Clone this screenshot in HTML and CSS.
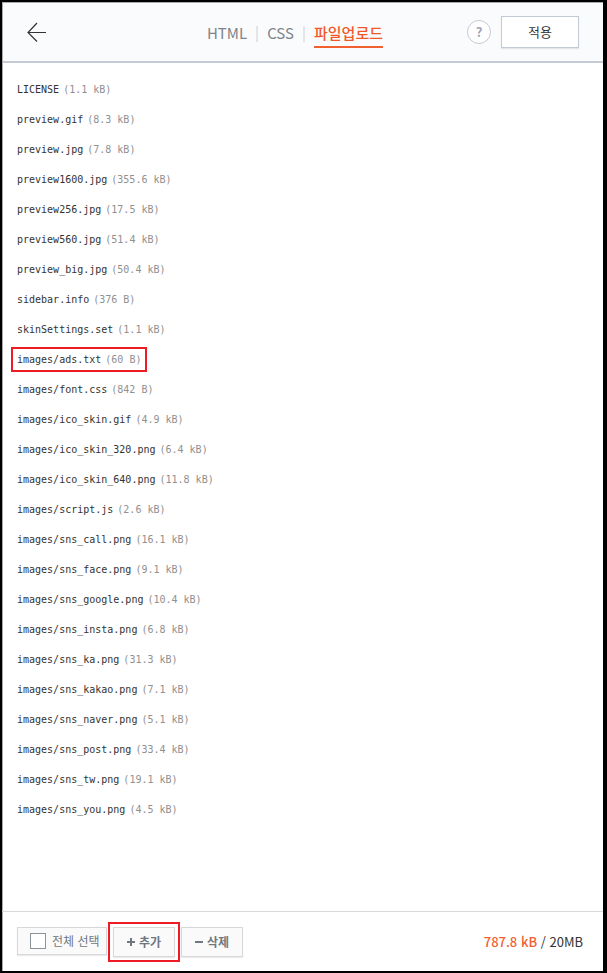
FILE: index.html
```html
<!DOCTYPE html>
<html lang="ko">
<head>
    <meta charset="UTF-8">
    <meta name="viewport" content="width=device-width, initial-scale=1.0">
    <title>파일업로드</title>
    <link rel="stylesheet" href="styles.css">
</head>
<body>
    <div class="editor">
        <header class="header">
            <button type="button" class="btn-back" aria-label="뒤로">
                <svg width="20" height="20" viewBox="0 0 20 20" fill="none" stroke="#333" stroke-width="1.2"><path d="M19 10.5H1M10 1L1 10.5L10 19.5"/></svg>
            </button>
            <nav class="tabs">
                <a href="#" class="tab">HTML</a>
                <a href="#" class="tab">CSS</a>
                <a href="#" class="tab on">파일업로드</a>
            </nav>
            <div class="header-right">
                <button type="button" class="btn-help">?</button>
                <button type="button" class="btn-apply">적용</button>
            </div>
        </header>

        <main class="content">
            <ul class="file-list">
                <li><span class="file">LICENSE<span class="size">(1.1 kB)</span></span></li>
                <li><span class="file">preview.gif<span class="size">(8.3 kB)</span></span></li>
                <li><span class="file">preview.jpg<span class="size">(7.8 kB)</span></span></li>
                <li><span class="file">preview1600.jpg<span class="size">(355.6 kB)</span></span></li>
                <li><span class="file">preview256.jpg<span class="size">(17.5 kB)</span></span></li>
                <li><span class="file">preview560.jpg<span class="size">(51.4 kB)</span></span></li>
                <li><span class="file">preview_big.jpg<span class="size">(50.4 kB)</span></span></li>
                <li><span class="file">sidebar.info<span class="size">(376 B)</span></span></li>
                <li><span class="file">skinSettings.set<span class="size">(1.1 kB)</span></span></li>
                <li><span class="file marked">images/ads.txt<span class="size">(60 B)</span></span></li>
                <li><span class="file">images/font.css<span class="size">(842 B)</span></span></li>
                <li><span class="file">images/ico_skin.gif<span class="size">(4.9 kB)</span></span></li>
                <li><span class="file">images/ico_skin_320.png<span class="size">(6.4 kB)</span></span></li>
                <li><span class="file">images/ico_skin_640.png<span class="size">(11.8 kB)</span></span></li>
                <li><span class="file">images/script.js<span class="size">(2.6 kB)</span></span></li>
                <li><span class="file">images/sns_call.png<span class="size">(16.1 kB)</span></span></li>
                <li><span class="file">images/sns_face.png<span class="size">(9.1 kB)</span></span></li>
                <li><span class="file">images/sns_google.png<span class="size">(10.4 kB)</span></span></li>
                <li><span class="file">images/sns_insta.png<span class="size">(6.8 kB)</span></span></li>
                <li><span class="file">images/sns_ka.png<span class="size">(31.3 kB)</span></span></li>
                <li><span class="file">images/sns_kakao.png<span class="size">(7.1 kB)</span></span></li>
                <li><span class="file">images/sns_naver.png<span class="size">(5.1 kB)</span></span></li>
                <li><span class="file">images/sns_post.png<span class="size">(33.4 kB)</span></span></li>
                <li><span class="file">images/sns_tw.png<span class="size">(19.1 kB)</span></span></li>
                <li><span class="file">images/sns_you.png<span class="size">(4.5 kB)</span></span></li>
            </ul>
        </main>

        <footer class="footer">
            <div class="actions">
                <label class="check-all" for="checkAll"><input type="checkbox" id="checkAll">전체 선택</label>
                <button type="button" class="btn-file marked">
                    <svg width="8" height="8" viewBox="0 0 8 8" fill="#6f7780"><path d="M3 0h2v3h3v2H5v3H3V5H0V3h3z"/></svg>추가
                </button>
                <button type="button" class="btn-file">
                    <svg width="8" height="8" viewBox="0 0 8 8" fill="#6f7780"><path d="M0 3h8v2H0z"/></svg>삭제
                </button>
            </div>
            <p class="usage"><strong>787.8 kB</strong> / 20MB</p>
        </footer>
    </div>
</body>
</html>
```

FILE: styles.css
```css
* {
    box-sizing: border-box;
}
body {
    margin: 0;
    font-family: "Noto Sans CJK KR", sans-serif;
    color: #333;
}
button {
    margin: 0;
    padding: 0;
    font-family: inherit;
    cursor: pointer;
}
.editor {
    display: flex;
    flex-direction: column;
    min-height: 100vh;
    border: solid #000;
    border-width: 2px 4px 2px 2px;
    background: #fff;
    box-shadow: inset 1px 1px 0 #aaa;
}

/* header */
.header {
    display: grid;
    grid-template-columns: 1fr auto 1fr;
    align-items: center;
    height: 60px;
    margin: 1px 0 0 1px;
    padding: 0 24px;
    border-bottom: 2px solid #c4cad6;
    background: #fafbfd;
}
.btn-back {
    width: 20px;
    height: 20px;
    border: 0;
    background: none;
}
.btn-back svg {
    display: block;
}
.tabs {
    display: flex;
    gap: 20px;
    padding: 5px 16px 0 0;
}
.tab {
    position: relative;
    padding-bottom: 2px;
    border-bottom: 2px solid transparent;
    font-size: 15px;
    line-height: 22px;
    color: #808388;
    text-decoration: none;
}
.tab + .tab::before {
    content: "";
    position: absolute;
    left: -11px;
    top: 4px;
    width: 2px;
    height: 16px;
    background: #e4e5e7;
}
.tab.on {
    border-color: #f1602f;
    font-weight: 500;
    color: #f1592a;
}
.header-right {
    display: flex;
    justify-content: flex-end;
    align-items: center;
    gap: 10px;
}
.btn-help {
    width: 24px;
    height: 24px;
    border: 1px solid #c4cad6;
    border-radius: 50%;
    background: #fff;
    font-size: 13px;
    font-weight: 700;
    line-height: 22px;
    color: #a0a3b3;
}
.btn-apply {
    width: 78px;
    height: 32px;
    padding-bottom: 2px;
    border: 1px solid #c4cad6;
    background: #fff;
    box-shadow: 0 1px 1px #e3e6eb;
    font-size: 13px;
    color: #333;
}

/* file list */
.content {
    flex: 1;
    padding: 11px 15px;
}
.file-list {
    margin: 0;
    padding: 0;
    list-style: none;
    font-family: "DejaVu Sans Mono", monospace;
    font-size: 10px;
}
.file-list li {
    display: flex;
    align-items: center;
    height: 30px;
}
.file {
    line-height: 13px;
}
.size {
    margin-left: 4px;
    color: #909090;
}
.marked {
    outline: 2px solid #ed1c24;
    outline-offset: 4px;
}

/* footer */
.footer {
    display: flex;
    justify-content: space-between;
    align-items: center;
    height: 60px;
    padding: 0 20px 0 15px;
    border-top: 1px solid #d9d9d9;
}
.actions {
    display: flex;
    align-items: flex-start;
    gap: 6px;
}
.check-all,
.btn-file {
    display: flex;
    align-items: center;
    border: 1px solid #d8d8d8;
    background: #fafafa;
    box-shadow: 0 1px 1px #ececec;
    font-size: 12px;
    color: #6f7780;
}
.check-all {
    gap: 6px;
    width: 90px;
    height: 28px;
    padding-left: 12px;
    white-space: nowrap;
}
.check-all input {
    appearance: none;
    flex: none;
    width: 16px;
    height: 16px;
    margin: 0;
    border: 1px solid #8d9499;
    background: #fff;
}
.check-all input:checked {
    background: #6f7780;
}
.btn-file {
    justify-content: center;
    gap: 4px;
    width: 62px;
    height: 30px;
    font-weight: 700;
}
.btn-file.marked {
    outline-offset: 3px;
}
.usage {
    margin: 0;
    font-size: 13px;
}
.usage strong {
    font-weight: 500;
    color: #f1602f;
}
```
